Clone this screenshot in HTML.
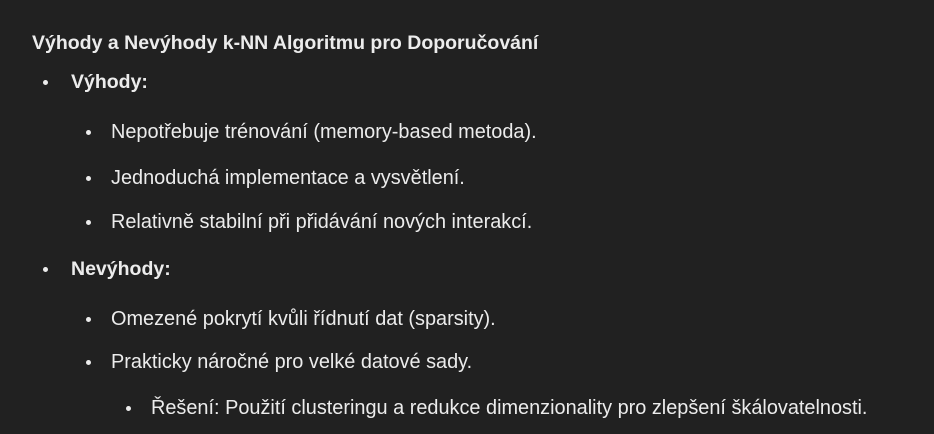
<!DOCTYPE html>
<html><head><meta charset="utf-8"><style>
html,body{margin:0;padding:0;background:#212121;width:934px;height:434px;overflow:hidden}
body{font-family:"Liberation Sans",sans-serif;color:#ececec;font-size:19.9px;position:relative}
.l{position:absolute;white-space:nowrap;line-height:24px;height:24px}
.b{font-weight:bold;font-size:19.5px}
.d{position:absolute;width:5px;height:5px;border-radius:50%;background:#ececec}
</style></head><body>
<div class="l b" style="left:32px;top:31px">Výhody a Nevýhody k-NN Algoritmu pro Doporučování</div>

<div class="d" style="left:43px;top:80px"></div>
<div class="l b" style="left:71px;top:70px">Výhody:</div>

<div class="d" style="left:86px;top:130px"></div>
<div class="l" style="left:111px;top:120px">Nepotřebuje trénování (memory-based metoda).</div>
<div class="d" style="left:86px;top:176px"></div>
<div class="l" style="left:111px;top:166px">Jednoduchá implementace a vysvětlení.</div>
<div class="d" style="left:86px;top:220px"></div>
<div class="l" style="left:111px;top:210px">Relativně stabilní při přidávání nových interakcí.</div>

<div class="d" style="left:43px;top:267px"></div>
<div class="l b" style="left:71px;top:257px">Nevýhody:</div>

<div class="d" style="left:86px;top:317px"></div>
<div class="l" style="left:111px;top:307px">Omezené pokrytí kvůli řídnutí dat (sparsity).</div>
<div class="d" style="left:86px;top:360px"></div>
<div class="l" style="left:111px;top:350px">Prakticky náročné pro velké datové sady.</div>
<div class="d" style="left:126px;top:406px"></div>
<div class="l" style="left:151px;top:396px">Řešení: Použití clusteringu a redukce dimenzionality pro zlepšení škálovatelnosti.</div>
</body></html>
